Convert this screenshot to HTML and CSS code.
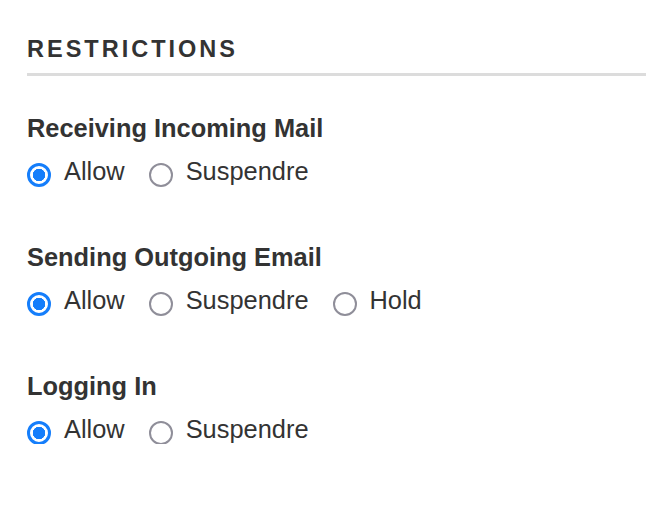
FILE: index.html
```html
<!DOCTYPE html>
<html>
	<head>
		<meta charset="utf-8">
		<title>Restrictions</title>
		<link rel="stylesheet" href="styles.css">
	</head>
	<body>
		<div class="panel">
			<h2 class="panel-title">Restrictions</h2>

			<div class="group first">
				<h3 class="group-title">Receiving Incoming Mail</h3>
				<div class="options">
					<label class="option"><input type="radio" name="incoming" checked><span>Allow</span></label>
					<label class="option"><input type="radio" name="incoming"><span>Suspendre</span></label>
				</div>
			</div>

			<div class="group">
				<h3 class="group-title">Sending Outgoing Email</h3>
				<div class="options">
					<label class="option"><input type="radio" name="outgoing" checked><span>Allow</span></label>
					<label class="option"><input type="radio" name="outgoing"><span>Suspendre</span></label>
					<label class="option"><input type="radio" name="outgoing"><span>Hold</span></label>
				</div>
			</div>

			<div class="group">
				<h3 class="group-title">Logging In</h3>
				<div class="options">
					<label class="option"><input type="radio" name="login" checked><span>Allow</span></label>
					<label class="option"><input type="radio" name="login"><span>Suspendre</span></label>
				</div>
			</div>
		</div>
	</body>
</html>
```

FILE: styles.css
```css
*{
	margin: 0;
	padding: 0;
	box-sizing: border-box;
}
body{
	font-family: "Liberation Sans", Arial, sans-serif;
	color: #333;
	background: #fff;
}
.panel{
	padding: 35px 0 0 27px;
}
.panel-title{
	font-size: 23.5px;
	line-height: 28px;
	font-weight: bold;
	text-transform: uppercase;
	letter-spacing: 3px;
	padding-bottom: 10px;
	border-bottom: 3px solid #dcdcdc;
}
.group{
	margin-top: 56px;
}
.group.first{
	margin-top: 37px;
}
.group-title{
	font-size: 25.4px;
	line-height: 30px;
	font-weight: bold;
	margin-bottom: 13px;
}
.options{
	display: flex;
	gap: 24px;
	font-size: 25.4px;
	line-height: 30px;
}
.option{
	display: flex;
	align-items: flex-start;
	gap: 13px;
	height: 30px;
}
/* round radio, grey when off, blue ring with a dot when on */
.option input{
	appearance: none;
	-webkit-appearance: none;
	width: 24px;
	height: 24px;
	margin-top: 7px;
	border: 2.75px solid #8f8e99;
	border-radius: 50%;
	background: #fff;
	flex: none;
}
.option input:checked{
	border: 3px solid #157efb;
	background: radial-gradient(circle, #157efb 0 6px, #fff 6.5px);
}
```
